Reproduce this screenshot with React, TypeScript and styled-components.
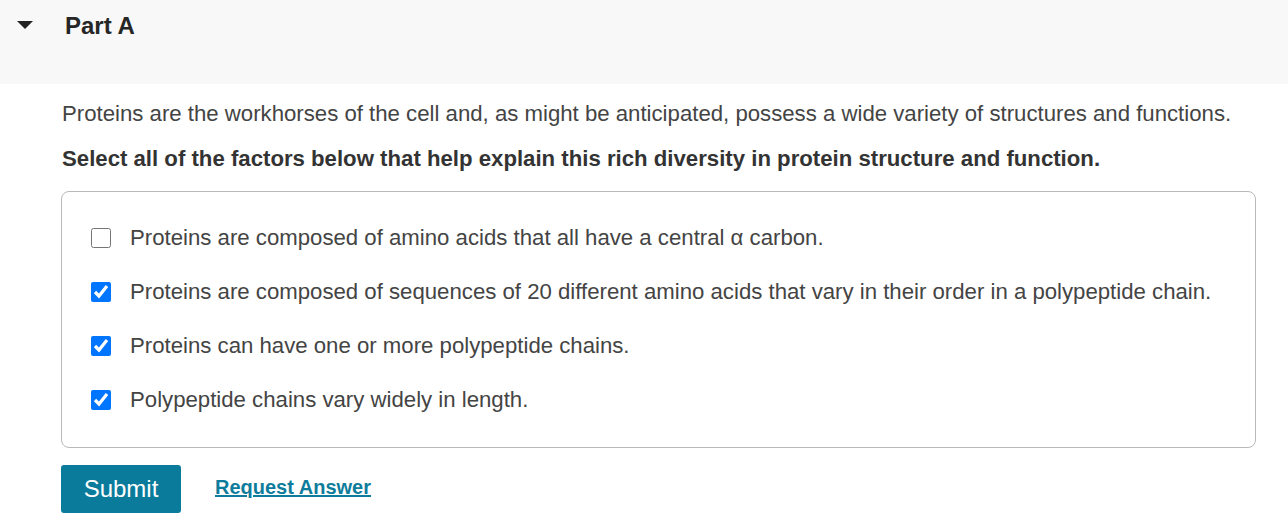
import React from "react";
import styled, { createGlobalStyle } from "styled-components";

const Global = createGlobalStyle`
  html, body { margin: 0; padding: 0; background: #ffffff; }
  body { font-family: "Liberation Sans", Arial, sans-serif; color: #444444; }
`;

const Page = styled.div`
  display: flex;
  flex-direction: column;
`;

const Header = styled.div`
  height: 84px;
  background: #f8f8f8;
  display: flex;
  align-items: flex-start;
  padding-top: 12px;
  box-sizing: border-box;
`;

const Toggle = styled.span`
  width: 65px;
  display: flex;
  justify-content: flex-start;
  padding-left: 17px;
  padding-top: 9px;
  box-sizing: border-box;
`;

const Caret = styled.span`
  width: 0;
  height: 0;
  border-left: 8px solid transparent;
  border-right: 8px solid transparent;
  border-top: 8px solid #222;
`;

const Title = styled.h2`
  margin: 0;
  font-size: 24px;
  font-weight: 700;
  color: #262626;
  line-height: 28px;
`;

const Body = styled.div`
  padding: 16px 32px 0 61px;
  display: flex;
  flex-direction: column;
`;

const Prompt = styled.p<{ $bold?: boolean }>`
  margin: 0;
  margin-left: 1px;
  font-size: 22.2px;
  line-height: 28px;
  font-weight: ${(p) => (p.$bold ? 700 : 400)};
  color: ${(p) => (p.$bold ? "#333" : "#444")};
  margin-bottom: ${(p) => (p.$bold ? "18px" : "17px")};
`;

const Choices = styled.div`
  border: 1px solid #b9b9b9;
  border-radius: 8px;
  padding: 32px 28px 33px 28px;
  display: flex;
  flex-direction: column;
  gap: 26px;
`;

const Choice = styled.label`
  display: flex;
  align-items: center;
  gap: 19px;
  font-size: 22.2px;
  line-height: 28px;
  color: #444;
  cursor: pointer;
`;

const Box = styled.input`
  width: 20px;
  height: 20px;
  margin: 0 0 0 1px;
  accent-color: #0075ff;
  flex: none;
`;

const Actions = styled.div`
  display: flex;
  align-items: center;
  gap: 34px;
  margin-top: 17px;
`;

const SubmitButton = styled.button`
  background: #0b7b9c;
  color: #fff;
  border: none;
  border-radius: 3px;
  width: 120px;
  height: 48px;
  font-family: "Liberation Sans", Arial, sans-serif;
  font-size: 24px;
  cursor: pointer;
`;

const RequestLink = styled.a`
  color: #0e7c9b;
  font-size: 20px;
  font-weight: 700;
  text-decoration: underline;
  cursor: pointer;
  margin-bottom: 4px;
`;

const choices = [
  { text: "Proteins are composed of amino acids that all have a central α carbon.", checked: false },
  { text: "Proteins are composed of sequences of 20 different amino acids that vary in their order in a polypeptide chain.", checked: true },
  { text: "Proteins can have one or more polypeptide chains.", checked: true },
  { text: "Polypeptide chains vary widely in length.", checked: true },
];

export default function App() {
  const [state, setState] = React.useState(choices.map((c) => c.checked));
  return (
    <Page>
      <Global />
      <Header>
        <Toggle>
          <Caret />
        </Toggle>
        <Title>Part A</Title>
      </Header>
      <Body>
        <Prompt>
          Proteins are the workhorses of the cell and, as might be anticipated, possess a wide variety of structures and functions.
        </Prompt>
        <Prompt $bold>
          Select all of the factors below that help explain this rich diversity in protein structure and function.
        </Prompt>
        <Choices>
          {choices.map((c, i) => (
            <Choice key={i}>
              <Box
                type="checkbox"
                checked={state[i]}
                onChange={() => setState((s) => s.map((v, j) => (j === i ? !v : v)))}
              />
              {c.text}
            </Choice>
          ))}
        </Choices>
        <Actions>
          <SubmitButton>Submit</SubmitButton>
          <RequestLink>Request Answer</RequestLink>
        </Actions>
      </Body>
    </Page>
  );
}
